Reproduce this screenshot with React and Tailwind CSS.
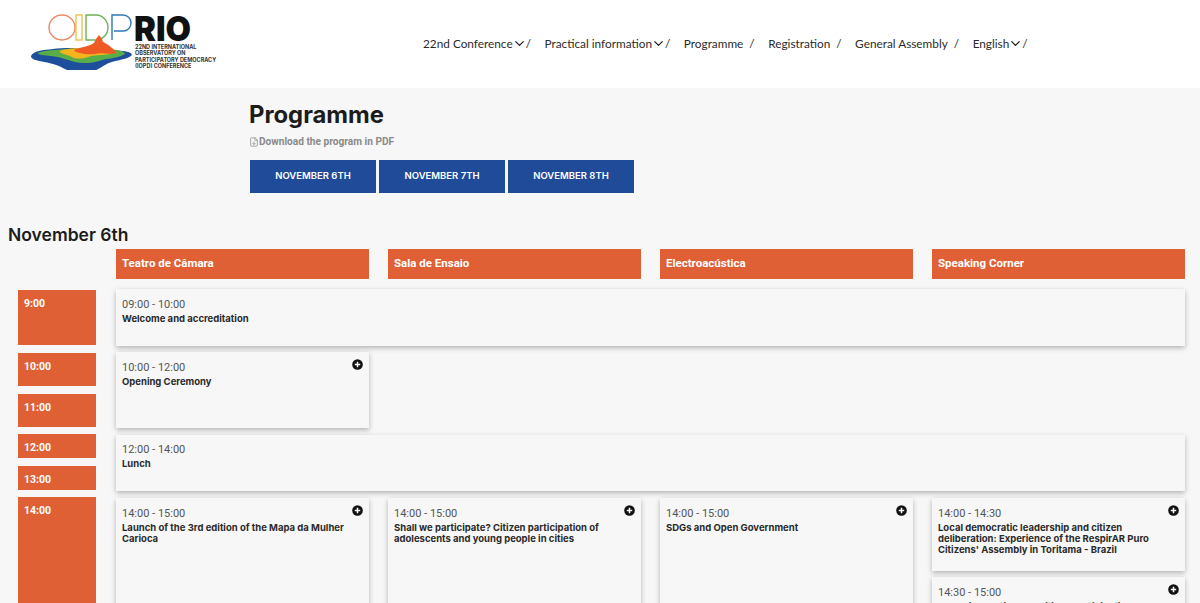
import { ChevronDown, FileDown } from 'lucide-react';

const heading = "font-['Inter',sans-serif]";
const navFont = "font-['Lato',sans-serif]";
const body = "font-['Roboto',sans-serif]";

const navItems = [
  { label: '22nd Conference', menu: true },
  { label: 'Practical information', menu: true },
  { label: 'Programme' },
  { label: 'Registration' },
  { label: 'General Assembly' },
  { label: 'English', menu: true },
];

const rooms = ['Teatro de Câmara', 'Sala de Ensaio', 'Electroacústica', 'Speaking Corner'];

function Logo() {
  return (
    <svg width="190" height="70" viewBox="0 0 190 70" className="shrink-0">
      <g fill="none" strokeWidth="1.400">
        <ellipse cx="32" cy="27.500" rx="13" ry="12.500" stroke="#ee8a62" />
        <rect x="46" y="15" width="6" height="25" stroke="#efc04f" />
        <path d="M56 15h10a12 12.500 0 0 1 0 25H56z" stroke="#6db356" />
        <path d="M82 40V15h11a8 8 0 0 1 0 16H84" stroke="#2e79b9" />
      </g>
      <text x="104" y="41" fontFamily="Inter, sans-serif" fontWeight="900" fontSize="34" fill="#111" textLength="57" lengthAdjust="spacingAndGlyphs">RIO</text>
      <g fontFamily="Inter, sans-serif" fontWeight="700" fontSize="5.500" fill="#333">
        <text x="105" y="48.500">22ND INTERNATIONAL</text>
        <text x="105" y="55">OBSERVATORY ON</text>
        <text x="105" y="61.500">PARTICIPATORY DEMOCRACY</text>
        <text x="105" y="68">(IOPD) CONFERENCE</text>
      </g>
      <path d="M1 56c2-5 12-6 22-7 14-2 40-1 70 2 8 1 10 3 8 5-5 4-18 4-26 9-8 5-18 11-28 9-8-2-14-7-24-10-10-3-22-3-22-8z" fill="#1d4f9c" />
      <path d="M8 53c6-3 18-3 28-4 18-2 40-2 55 2 4 1 5 3 2 4-8 4-16 3-24 6-6 2-16 3-24 1-8-2-14-5-24-6-6-1-14-1-13-3z" fill="#5aae48" />
      <path d="M30 51c8-3 18-3 30-3 12 0 24 3 22 5-4 3-16 1-24 4-6 2-12 2-16 0-4-2-14-4-12-6z" fill="#f4b41f" />
      <path d="M44 50c8-3 16-4 20-7l2-4 3-4 3 4 1 3c4 2 9 5 14 11-10 2-14-1-22 1-8 1-20-1-21-4z" fill="#ef5a24" />
    </svg>
  );
}

function NavBar() {
  return (
    <header className="flex h-[88px] items-start bg-white pl-[30px]">
      <Logo />
      <nav className={`ml-[203px] mt-[36px] flex items-center gap-[13.500px] text-[11.800px] leading-[14px] text-[#2b2b2b] ${navFont}`}>
        {navItems.map((item) => (
          <a key={item.label} className="flex items-center whitespace-nowrap">
            {item.label}
            {item.menu ? <ChevronDown size={15} strokeWidth={1.800} className="-mx-[1px] text-[#111]" /> : <span className="w-[6px]" />}
            <span>/</span>
          </a>
        ))}
      </nav>
    </header>
  );
}

function AddIcon() {
  return (
    <svg width="11" height="11" viewBox="0 0 11 11" className="absolute right-[6px] top-[7px]">
      <circle cx="5.500" cy="5.500" r="5.300" fill="#111" />
      <path d="M5.500 2.800v5.400M2.800 5.500h5.400" stroke="#fff" strokeWidth="1.500" />
    </svg>
  );
}

function Session({ time, title, add, className = '' }) {
  return (
    <div className={`relative bg-[#f7f7f7] px-[6px] pt-[8px] shadow-[0_2px_5px_rgba(0,0,0,0.28)] ${className}`}>
      {add && <AddIcon />}
      <div className={`text-[11px] leading-[15px] text-[#555] ${body}`}>{time}</div>
      <div className={`mt-[1px] text-[9.500px] font-bold leading-[11px] text-[#2a2a2a] ${heading}`}>{title}</div>
    </div>
  );
}

function Hour({ label, className = '' }) {
  return (
    <div className={`w-[78px] self-start bg-[#e06035] px-[6px] pt-[7px] text-[10.500px] font-bold leading-[14px] text-white ${body} ${className}`}>
      {label}
    </div>
  );
}

export default function App() {
  return (
    <div className="h-[603px] overflow-hidden bg-[#f7f7f7]">
      <NavBar />

      <section className="pl-[250px] pt-[13px]">
        <h1 className={`-ml-[1px] text-[23.800px] font-bold leading-[28px] text-[#1c1c1c] ${heading}`}>Programme</h1>
        <a className={`-ml-[1px] mt-[6px] flex items-center text-[10.150px] font-bold leading-[14px] text-[#8a8a8a] ${body}`}>
          <FileDown size={10} strokeWidth={1.800} />
          Download the program in PDF
        </a>
        <div className="mt-[11px] flex gap-[3px]">
          {['November 6th', 'November 7th', 'November 8th'].map((day) => (
            <button key={day} className={`h-[33px] w-[126px] bg-[#1f4b98] text-[9.500px] font-semibold uppercase text-white ${heading}`}>
              {day}
            </button>
          ))}
        </div>
      </section>

      <h2 className={`ml-[8px] mt-[31px] text-[17.500px] font-semibold leading-[22px] text-[#1c1c1c] ${heading}`}>November 6th</h2>

      <div className="ml-[18px] mt-[3px] grid grid-cols-[79px_253px_253px_253px_253px] grid-rows-[33px_55px_33px_32px_24px_23px_200px] gap-x-[19px] gap-y-[8px]">
        <div className="col-start-1 row-start-1" />
        {rooms.map((room) => (
          <div key={room} className={`flex h-[30px] items-center bg-[#e06035] px-[6px] text-[11.500px] font-bold text-white ${body}`}>
            {room}
          </div>
        ))}

        <Hour label="9:00" className="col-start-1 row-start-2 h-[55px]" />
        <Session time="09:00 - 10:00" title="Welcome and accreditation" className="col-span-4 col-start-2 row-start-2 -my-[1px]" />

        <Hour label="10:00" className="col-start-1 row-start-3 h-[33px]" />
        <Session add time="10:00 - 12:00" title="Opening Ceremony" className="col-start-2 row-span-2 row-start-3 -mb-[2px] -mt-[1px]" />
        <Hour label="11:00" className="col-start-1 row-start-4 h-[33px]" />

        <Hour label="12:00" className="col-start-1 row-start-5 h-[24px]" />
        <Session time="12:00 - 14:00" title="Lunch" className="col-span-4 col-start-2 row-span-2 row-start-5 -mb-[2px] mt-[1px] !pt-[7px]" />
        <Hour label="13:00" className="col-start-1 row-start-6 h-[24px]" />

        <Hour label="14:00" className="col-start-1 row-start-7 h-[200px]" />
        <Session add time="14:00 - 15:00" title="Launch of the 3rd edition of the Mapa da Mulher Carioca" className="col-start-2 row-start-7 mt-[1px]" />
        <Session add time="14:00 - 15:00" title="Shall we participate? Citizen participation of adolescents and young people in cities" className="col-start-3 row-start-7 mt-[1px]" />
        <Session add time="14:00 - 15:00" title="SDGs and Open Government" className="col-start-4 row-start-7 mt-[1px]" />
        <div className="col-start-5 row-start-7 mt-[1px] flex flex-col gap-[6px]">
          <Session add time="14:00 - 14:30" title="Local democratic leadership and citizen deliberation: Experience of the RespirAR Puro Citizens' Assembly in Toritama - Brazil" className="h-[73px] shrink-0" />
          <Session add time="14:30 - 15:00" title="Urban innovation and citizen participation" className="h-[100px] shrink-0" />
        </div>
      </div>
    </div>
  );
}
